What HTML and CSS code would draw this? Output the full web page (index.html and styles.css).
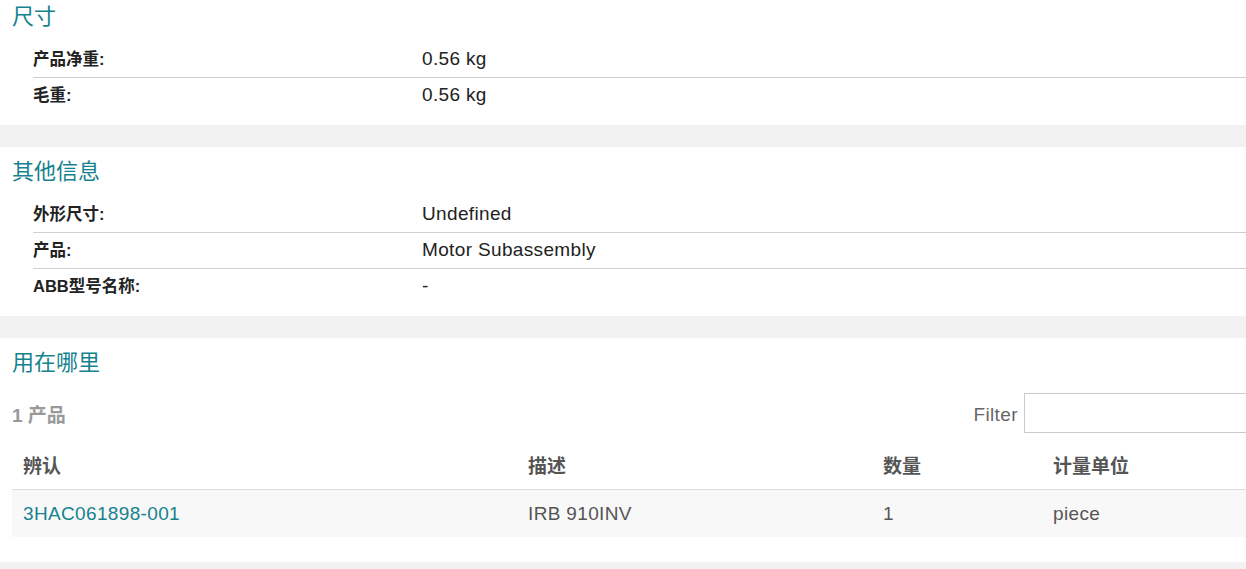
FILE: index.html
```html
<!DOCTYPE html>
<html lang="zh">
<head>
<meta charset="utf-8">
<title>产品信息</title>
<link rel="stylesheet" href="styles.css">
</head>
<body>
<div class="page">
  <section class="panel panel-first">
    <h2 class="panel-title">尺寸</h2>
    <div class="props">
      <div class="prop"><span class="prop-label">产品净重:</span><span class="prop-value">0.56 kg</span></div>
      <div class="prop"><span class="prop-label">毛重:</span><span class="prop-value">0.56 kg</span></div>
    </div>
  </section>
  <section class="panel">
    <h2 class="panel-title">其他信息</h2>
    <div class="props">
      <div class="prop"><span class="prop-label">外形尺寸:</span><span class="prop-value">Undefined</span></div>
      <div class="prop"><span class="prop-label">产品:</span><span class="prop-value">Motor Subassembly</span></div>
      <div class="prop"><span class="prop-label">ABB型号名称:</span><span class="prop-value">-</span></div>
    </div>
  </section>
  <section class="panel panel-last">
    <h2 class="panel-title">用在哪里</h2>
    <div class="toolbar">
      <span class="count">1 产品</span>
      <label class="filter"><span class="filter-label">Filter</span><input class="filter-input" type="text"></label>
    </div>
    <table class="grid">
      <thead>
        <tr><th class="c1">辨认</th><th class="c2">描述</th><th class="c3">数量</th><th class="c4">计量单位</th></tr>
      </thead>
      <tbody>
        <tr><td><a class="link" href="#">3HAC061898-001</a></td><td>IRB 910INV</td><td>1</td><td>piece</td></tr>
      </tbody>
    </table>
  </section>
</div>
</body>
</html>
```

FILE: styles.css
```css
html, body {
  margin: 0;
  padding: 0;
  overflow: hidden;
}
body {
  background: #f2f2f2;
  font-family: "Liberation Sans", Arial, "Noto Sans CJK SC", sans-serif;
  color: #222;
}
.page {
  display: flex;
  flex-direction: column;
  gap: 22px;
}
.panel {
  background: #fff;
  padding: 10px 0 12px 12px;
}
.panel-first {
  padding-top: 2px;
}
.panel-last {
  padding-bottom: 25px;
}
.panel-title {
  margin: 0 0 9px;
  font-size: 22px;
  line-height: 30px;
  font-weight: normal;
  color: #16828e;
}
.props {
  margin-left: 21px;
}
.prop {
  display: flex;
  align-items: center;
  height: 36px;
  border-top: 1px solid #cfcfcf;
  box-sizing: border-box;
}
.prop:first-child {
  border-top: none;
}
.prop-label {
  width: 389px;
  font-size: 16.5px;
  line-height: 20px;
  font-weight: bold;
  color: #222;
  margin-top: -1px;
}
.prop-value {
  font-size: 19px;
  line-height: 22px;
  letter-spacing: 0.35px;
  color: #222;
  margin-top: -1px;
}
.toolbar {
  display: flex;
  align-items: center;
  justify-content: space-between;
  height: 40px;
  margin-top: 15px;
  margin-bottom: 7px;
}
.count {
  font-size: 19px;
  font-weight: bold;
  color: #999;
}
.filter {
  display: flex;
  align-items: center;
  gap: 6px;
  margin-right: -38px;
}
.filter-label {
  font-size: 19px;
  letter-spacing: 0.4px;
  color: #666;
  margin-top: 4px;
}
.filter-input {
  width: 260px;
  height: 40px;
  box-sizing: border-box;
  border: 1px solid #ccc;
  padding: 4px 8px;
  font-size: 16px;
}
.grid {
  width: 1250px;
  border-collapse: collapse;
  table-layout: fixed;
}
.grid th, .grid td {
  text-align: left;
  padding: 0 11px;
  font-size: 19px;
}
.grid th {
  height: 49px;
  font-weight: bold;
  color: #555;
  border-bottom: 1px solid #ddd;
}
.grid td {
  height: 47px;
  color: #555;
  background: #f8f8f8;
  letter-spacing: 0.35px;
}
.c1 { width: 483px; }
.c2 { width: 333px; }
.c3 { width: 148px; }
.link {
  color: #16828e;
  text-decoration: none;
}
```
